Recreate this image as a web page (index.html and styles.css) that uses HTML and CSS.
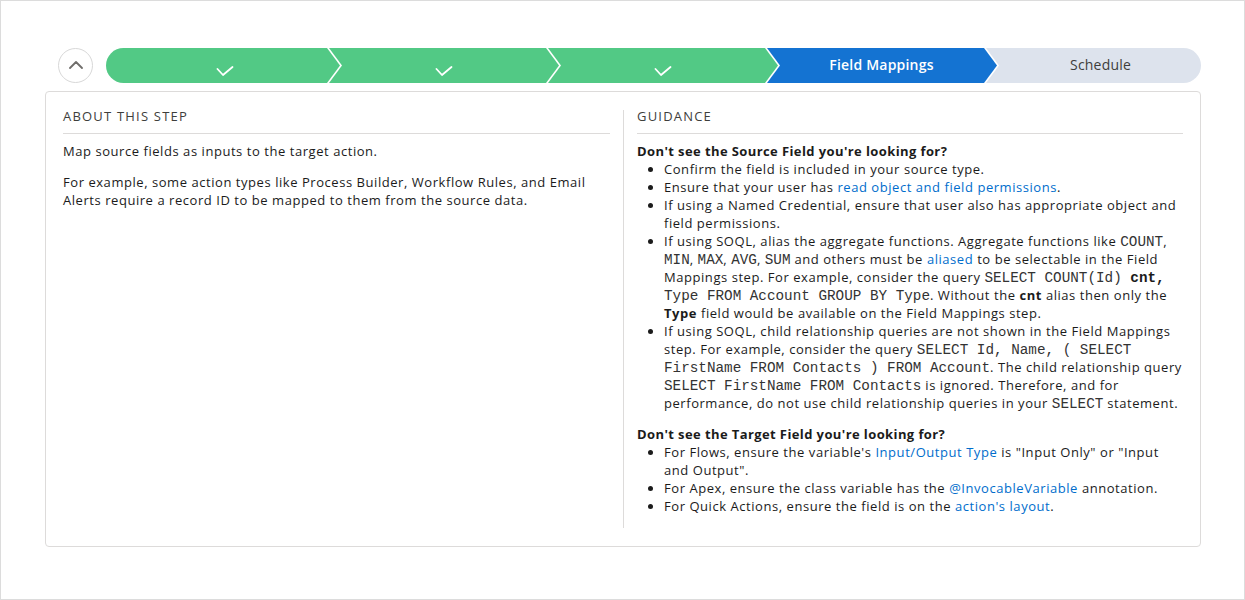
FILE: index.html
```html
<!DOCTYPE html>
<html lang="en">
<head>
<meta charset="utf-8">
<title>Field Mappings</title>
<link rel="stylesheet" href="styles.css">
</head>
<body>
<div class="frame">
  <div class="path">
    <button class="toggle" type="button" aria-label="Collapse">
      <svg width="14" height="8" viewBox="0 0 14 8"><path d="M1 7 L7 1 L13 7" fill="none" stroke="#706e6b" stroke-width="1.8" stroke-linecap="round" stroke-linejoin="round"/></svg>
    </button>
    <ol class="stages">
      <li class="stage done"><svg class="check" width="18" height="11" viewBox="0 0 18 11"><path d="M1.5 3 L7 9 L16.5 1" fill="none" stroke="#fff" stroke-width="1.8" stroke-linecap="round" stroke-linejoin="round"/></svg></li>
      <li class="stage done"><svg class="check" width="18" height="11" viewBox="0 0 18 11"><path d="M1.5 3 L7 9 L16.5 1" fill="none" stroke="#fff" stroke-width="1.8" stroke-linecap="round" stroke-linejoin="round"/></svg></li>
      <li class="stage done"><svg class="check" width="18" height="11" viewBox="0 0 18 11"><path d="M1.5 3 L7 9 L16.5 1" fill="none" stroke="#fff" stroke-width="1.8" stroke-linecap="round" stroke-linejoin="round"/></svg></li>
      <li class="stage current">Field Mappings</li>
      <li class="stage todo">Schedule</li>
    </ol>
  </div>

  <div class="card">
    <section class="col about">
      <h3 class="sec-title">About this step</h3>
      <p>Map source fields as inputs to the target action.</p>
      <p>For example, some action types like Process Builder, Workflow Rules, and Email Alerts require a record ID to be mapped to them from the source data.</p>
    </section>
    <section class="col guidance">
      <h3 class="sec-title">Guidance</h3>
      <h4 class="q">Don't see the Source Field you're looking for?</h4>
      <ul>
        <li>Confirm the field is included in your source type.</li>
        <li>Ensure that your user has <a href="#">read object and field permissions</a>.</li>
        <li>If using a Named Credential, ensure that user also has appropriate object and field permissions.</li>
        <li>If using SOQL, alias the aggregate functions. Aggregate functions like <code>COUNT</code>, <code>MIN</code>, <code>MAX</code>, <code>AVG</code>, <code>SUM</code> and others must be <a href="#">aliased</a> to be selectable in the Field Mappings step. For example, consider the query <code>SELECT COUNT(Id) <b>cnt,</b> Type FROM Account GROUP BY Type</code>. Without the <b>cnt</b> alias then only the <b>Type</b> field would be available on the Field Mappings step.</li>
        <li>If using SOQL, child relationship queries are not shown in the Field Mappings step. For example, consider the query <code>SELECT Id, Name, ( SELECT FirstName FROM Contacts ) FROM Account</code>. The child relationship query <code>SELECT FirstName FROM Contacts</code> is ignored. Therefore, and for performance, do not use child relationship queries in your <code>SELECT</code> statement.</li>
      </ul>
      <h4 class="q">Don't see the Target Field you're looking for?</h4>
      <ul>
        <li>For Flows, ensure the variable's <a href="#">Input/Output Type</a> is "Input Only" or "Input and Output".</li>
        <li>For Apex, ensure the class variable has the <a href="#">@InvocableVariable</a> annotation.</li>
        <li>For Quick Actions, ensure the field is on the <a href="#">action's layout</a>.</li>
      </ul>
    </section>
  </div>
</div>
</body>
</html>
```

FILE: styles.css
```css
* { box-sizing: border-box; }

html, body {
  margin: 0;
  padding: 0;
  background: #fff;
}

body {
  font-family: "Open Sans", "Noto Sans", Arial, sans-serif;
  font-size: 13px;
  line-height: 18px;
  letter-spacing: 0.55px;
  color: #1b1b1b;
}

.frame {
  width: 1245px;
  height: 600px;
  border: 1px solid #dcdcdc;
  padding-top: 47px;
}

/* ---------- path ---------- */
.path {
  display: flex;
  align-items: center;
  gap: 13px;
  margin: 0 43px 0 57px;
}

.toggle {
  width: 35px;
  height: 35px;
  flex: 0 0 35px;
  border: 1px solid #d8d8d8;
  border-radius: 50%;
  background: #fff;
  padding: 0;
  display: flex;
  align-items: center;
  justify-content: center;
}

.toggle svg { display: block; margin-top: -1px; }

.stages {
  flex: 1;
  display: flex;
  height: 35px;
  margin: 0;
  padding: 0;
  list-style: none;
  border-radius: 18px;
  overflow: hidden;
}

.stage {
  position: relative;
  flex: 1 1 0;
  display: flex;
  align-items: center;
  justify-content: center;
  padding-left: 18px;
  padding-bottom: 2px;
  font-size: 14px;
  letter-spacing: 0.2px;
}

.stage:not(:last-child)::before {
  content: "";
  position: absolute;
  top: 0;
  bottom: 0;
  left: 100%;
  width: 17px;
  background: #fff;
  clip-path: polygon(0 0, 4px 0, 17px 50%, 4px 100%, 0 100%);
  z-index: 1;
}

.stage:not(:last-child)::after {
  content: "";
  position: absolute;
  top: 0;
  bottom: 0;
  left: 100%;
  width: 15px;
  background: inherit;
  clip-path: polygon(0 0, 2px 0, 15px 50%, 2px 100%, 0 100%);
  z-index: 2;
}

.stage.done { background: #52c985; }
.stage.current {
  background: #1473d2;
  color: #fff;
  font-weight: 600;
}
.stage.todo {
  background: #dde3ed;
  color: #3e3e3c;
}

.check {
  display: block;
  margin-top: 14px;
}

/* ---------- card ---------- */
.card {
  margin: 8px 43px 0 44px;
  border: 1px solid #dddbda;
  border-radius: 4px;
  padding: 18px 17px 18px 17px;
  display: grid;
  grid-template-columns: 547px 1fr;
  column-gap: 13px;
  align-items: start;
}

.col.guidance {
  border-left: 1px solid #dddbda;
  padding-left: 13px;
}

.sec-title {
  margin: 0 0 8px;
  padding-bottom: 10px;
  border-bottom: 1px solid #dddbda;
  font-size: 13px;
  line-height: 13px;
  font-weight: 400;
  text-transform: uppercase;
  letter-spacing: 1.2px;
  color: #3e3e3c;
}

.about p {
  margin: 0 0 13px;
}

.q {
  margin: 0;
  font-size: 13px;
  font-weight: 700;
  letter-spacing: 0.4px;
}

.guidance ul {
  margin: 0 0 13px;
  padding-left: 27px;
}

a {
  color: #006dcc;
  text-decoration: none;
}

code {
  font-family: "Liberation Mono", "Courier New", monospace;
  font-size: 14.3px;
  line-height: 1;
  letter-spacing: 0;
  color: #333;
}

code b { color: #1b1b1b; }
```
